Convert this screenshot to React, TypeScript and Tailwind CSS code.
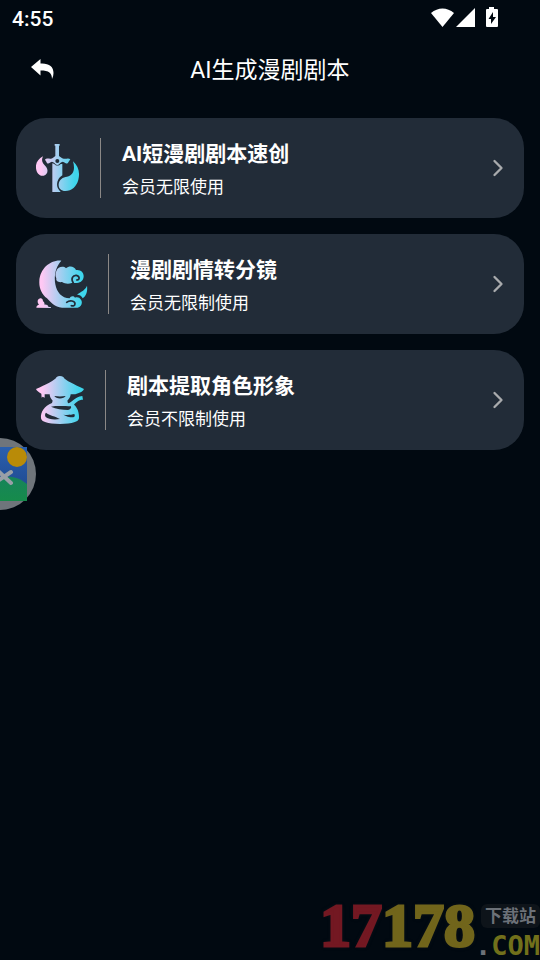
import { ReactNode } from "react"
import { ChevronRight } from "lucide-react"

type Tool = {
  id: string
  title: string
  desc: string
  icon: ReactNode
}

function IconGradient({ id, x1, x2 }: { id: string; x1: number; x2: number }) {
  return (
    <defs>
      <linearGradient id={id} gradientUnits="userSpaceOnUse" x1={x1} y1="0" x2={x2} y2="0">
        <stop offset="0" stopColor="#ffc8f4" />
        <stop offset="0.12" stopColor="#ffc8f4" />
        <stop offset="0.9" stopColor="#3ed6ec" />
        <stop offset="1" stopColor="#3ed6ec" />
      </linearGradient>
    </defs>
  )
}

function SwordIcon() {
  return (
    <svg viewBox="36 36 132 144" className="h-12 w-11 shrink-0" aria-hidden="true">
      <IconGradient id="sword" x1={36} x2={166} />
      <g fill="url(#sword)">
        <path d="M57 73 C42 81 34 94 36 109 C38 125 48 134 59 131 C71 128 74 114 66 104 C57 95 50 88 57 73Z" />
        <path d="M92 36 H107 V41 H105 V72 C109 75 113 79 119 80 C127 81 134 77 139 82 L134 89 C131 96 125 96 120 91 C116 87 112 91 108 94 A9 9 0 0 1 92 94 C88 91 84 87 80 91 C75 96 69 96 67 89 L63 83 C68 77 75 81 81 80 C87 79 90 75 94 72 V41 H92Z" />
        <path d="M85 94 L91 96 C96 102 105 102 110 96 L115 96 V130 C104 136 97 151 100 164 C102 170 105 174 109 178 V180 H85Z" />
        <path d="M147 88 C162 101 169 120 163 143 C158 163 143 177 124 177 C111 177 103 169 104 157 C105 143 117 135 129 134 C149 130 154 112 147 88Z" />
      </g>
      <circle cx="100" cy="87" r="6" fill="#222c38" />
    </svg>
  )
}

function MoonIcon() {
  return (
    <svg viewBox="36 36 156 144" className="h-12 w-13 shrink-0" aria-hidden="true">
      <IconGradient id="moon" x1={36} x2={186} />
      <g fill="url(#moon)">
        <path d="M112 38 C79 35 48 62 46 100 C45 121 54 139 69 151 C80 162 92 178 114 179 H161 C172 176 177 164 171 155 C167 148 159 146 153 149 C148 142 139 145 137 151 C113 151 98 132 94 109 C89 81 96 55 112 38Z" />
        <path d="M97 69 C102 56 118 53 126 61 C136 52 151 55 156 66 C170 64 179 73 179 84 C179 96 171 104 159 105 H143 C135 108 123 108 114 102 C103 104 95 99 97 91 C93 84 94 76 97 69Z" />
        <path d="M189 113 C184 126 173 130 159 140 C168 140 174 145 176 151 C188 143 191 128 189 113Z" />
        <path d="M37 179 C37 174 41 170 45 170 C39 163 40 154 46 152 C52 149 57 153 57 160 C62 162 62 168 61 170 C67 169 72 172 73 176 L81 178 V180Z" />
      </g>
      <g fill="none" stroke="#222c38" strokeWidth="5" strokeLinecap="round">
        <path d="M148 105 C139 92 147 81 157 82 C168 84 168 96 158 96" />
        <path d="M128 163 C138 155 153 159 153 167 C153 173 147 175 142 173" />
      </g>
    </svg>
  )
}

function SwordsmanIcon() {
  return (
    <svg viewBox="36 36 147 144" className="h-12 w-[49px] shrink-0" aria-hidden="true">
      <IconGradient id="swordsman" x1={36} x2={180} />
      <g fill="url(#swordsman)">
        <path d="M98 39 C103 35 112 35 118 39 C124 50 151 61 180 75 C178 82 169 86 154 91 H62 V101 L56 98 L53 101 L52 89 C43 84 38 80 36 75 C65 62 92 50 98 39Z" />
        <path d="M77 90 H140 C140 98 135 105 130 110 L132 118 C142 118 151 99 175 96 L177 107 C163 107 156 115 150 122 C160 130 166 145 165 163 C163 174 147 179 108 180 C69 179 53 174 51 163 C49 145 61 125 84 117 L86 110 C80 104 77 97 77 90Z" />
      </g>
      <g fill="#222c38">
        <path d="M91 96 C103 98 113 98 125 96 C121 105 96 106 91 96Z" />
        <path d="M81 128 C100 125 124 127 141 127 C143 132 139 137 132 138 C116 137 96 136 81 128Z" />
        <path d="M66 146 C76 154 94 157 108 165 C92 168 72 166 65 159 C62 154 63 149 66 146Z" />
        <path d="M118 152 C130 154 144 152 151 150 C154 155 152 160 147 160 C136 160 126 157 118 152Z" />
      </g>
    </svg>
  )
}

const tools: Tool[] = [
  { id: "script", title: "AI短漫剧剧本速创", desc: "会员无限使用", icon: <SwordIcon /> },
  { id: "storyboard", title: "漫剧剧情转分镜", desc: "会员无限制使用", icon: <MoonIcon /> },
  { id: "role", title: "剧本提取角色形象", desc: "会员不限制使用", icon: <SwordsmanIcon /> },
]

function StatusBar() {
  return (
    <div className="flex h-9 items-center justify-between pr-10 pl-3">
      <span className="pt-0.5 text-[21px] leading-9 font-medium">4:55</span>
      <svg viewBox="0 0 70 22" className="h-[22px] w-[70px]" fill="#fff" aria-hidden="true">
        <path d="M1 6 C8 0 17 0 24 6 L12.500 20Z" />
        <path d="M45 1 V20 H26Z" />
        <path
          fillRule="evenodd"
          d="M59 0 H64 V2 H67 Q68 2 68 3 V19 Q68 20 67 20 H57 Q56 20 56 19 V3 Q56 2 57 2 H59Z M63 5 L58.500 12 H61 V17 L66 10 H63Z"
        />
      </svg>
    </div>
  )
}

function Header() {
  return (
    <header className="grid h-[66px] grid-cols-[1fr_auto_1fr] items-center px-7">
      <button type="button" aria-label="返回" className="flex size-7 items-center justify-center">
        <svg viewBox="0 0 28 28" className="size-7" fill="#fff" aria-hidden="true">
          <path d="M3 12 L12.500 4 V8.500 C21 8 25.500 11.500 25.500 18 C25.500 20 25 22 24 24 C24 18 21 15.500 12.500 15.500 V20.500Z" />
        </svg>
      </button>
      <h1 className="pt-1 text-[23px] leading-8 font-normal">AI生成漫剧剧本</h1>
    </header>
  )
}

function ToolCard({ tool }: { tool: Tool }) {
  return (
    <button type="button" className="flex h-[100px] w-full items-center rounded-[30px] bg-[#222c38] px-5 text-left">
      {tool.icon}
      <span className="mr-[21px] ml-5 h-[60px] w-px shrink-0 bg-[#8b8886]" />
      <span className="flex flex-1 flex-col pt-1.5">
        <span className="text-[21px] leading-[33px] font-bold">{tool.title}</span>
        <span className="text-[17px] leading-[33px]">{tool.desc}</span>
      </span>
      <ChevronRight className="-mr-2 size-7 text-[#a9abad]" strokeWidth={2} />
    </button>
  )
}

function FloatingPhoto() {
  return (
    <button type="button" aria-label="图片" className="absolute top-[438px] left-0">
      <svg viewBox="0 0 36 72" className="h-[72px] w-9" aria-hidden="true">
        <path d="M0 0 A36 36 0 0 1 0 72Z" fill="#6f757b" />
        <linearGradient id="sky" x1="0" y1="0" x2="0" y2="1">
          <stop offset="0" stopColor="#2a5fae" />
          <stop offset="1" stopColor="#1d4489" />
        </linearGradient>
        <linearGradient id="hill" x1="0" y1="0" x2="0" y2="1">
          <stop offset="0" stopColor="#17845a" />
          <stop offset="1" stopColor="#168b4b" />
        </linearGradient>
        <path d="M0 9 H27 V63 H0Z" fill="url(#sky)" />
        <path d="M0 40 C9 37 19 39 27 46 V63 H0Z" fill="url(#hill)" />
        <circle cx="17" cy="19" r="10" fill="#b98b08" />
        <path d="M-2 33 L11 45 M11 34 L-1 42" stroke="#999fa7" strokeWidth="4" strokeLinecap="round" />
      </svg>
    </button>
  )
}

function SiteMark() {
  return (
    <div className="absolute right-0 bottom-0 flex items-end font-bold">
      <span className="font-['Liberation_Serif',serif] text-[62px] leading-[70px] [-webkit-text-stroke-width:3px] [text-shadow:0_0_4px_#1b1e22]">
        <span className="text-[#731822]">17</span>
        <span className="text-[#71651b]">178</span>
      </span>
      <span className="flex flex-col items-end">
        <span className="mb-1 rounded-md bg-[#0e141a] px-1 text-[17px] leading-6 text-[#6c7178]">下载站</span>
        <span className="font-['DejaVu_Sans_Mono',monospace] text-[27px] leading-7 text-[#71701b]">
          <span className="text-[#6c7178]">.</span>COM
        </span>
      </span>
    </div>
  )
}

export default function App() {
  return (
    <div className="relative min-h-screen bg-[#010911] font-[Roboto,'Noto_Sans_CJK_SC',sans-serif] text-white">
      <StatusBar />
      <Header />
      <main className="flex flex-col gap-4 p-4">
        {tools.map(tool => (
          <ToolCard key={tool.id} tool={tool} />
        ))}
      </main>
      <FloatingPhoto />
      <SiteMark />
    </div>
  )
}
